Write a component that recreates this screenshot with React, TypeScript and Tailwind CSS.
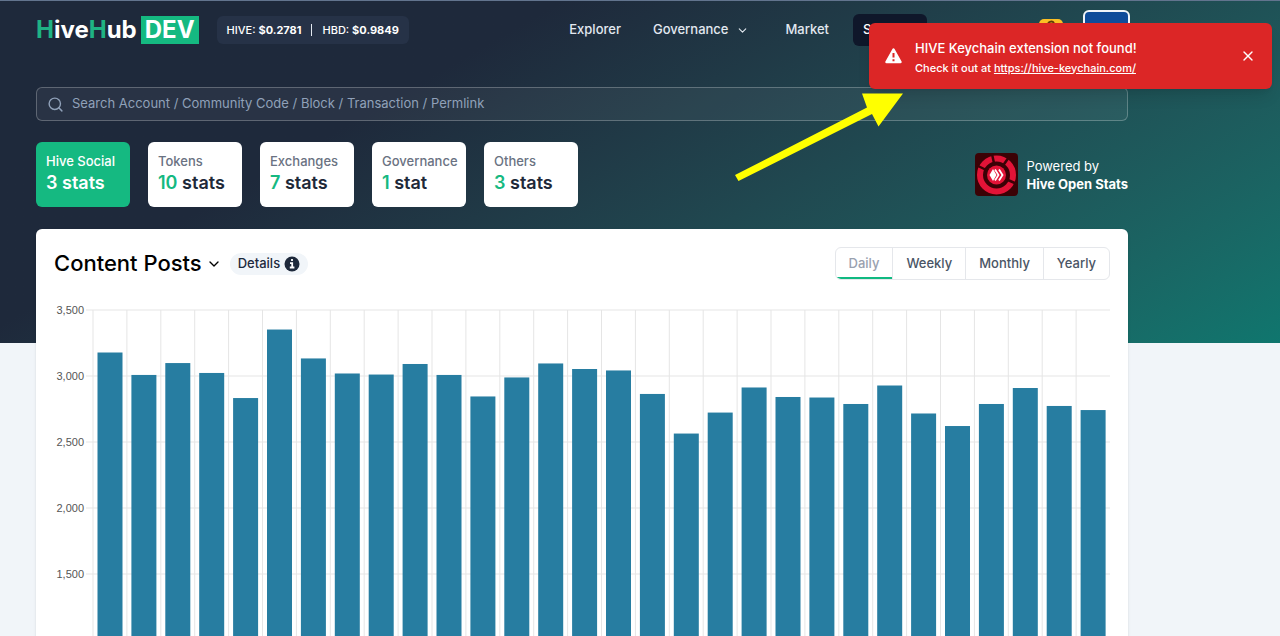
import { useState } from "react";
import clsx from "clsx";
import { ChevronDown, Search, X } from "lucide-react";

const categories = [
  { name: "Hive Social", count: 3 },
  { name: "Tokens", count: 10 },
  { name: "Exchanges", count: 7 },
  { name: "Governance", count: 1 },
  { name: "Others", count: 3 },
];

const periods = ["Daily", "Weekly", "Monthly", "Yearly"];

const posts = [
  3178, 3008, 3098, 3023, 2833, 3352, 3133, 3019, 3011, 3091, 3008, 2845, 2989,
  3095, 3053, 3042, 2864, 2564, 2723, 2913, 2841, 2837, 2788, 2928, 2716, 2621,
  2788, 2909, 2773, 2742,
];

const Logo = () => (
  <a href="#" className="flex items-center gap-1 text-2xl leading-7 font-bold">
    <span className="text-white">
      <span className="text-[#1fb384]">H</span>ive
      <span className="text-[#1fb384]">H</span>ub
    </span>
    <span className="bg-[#15b981] px-1 text-white">DEV</span>
  </a>
);

const Prices = () => (
  <div className="ml-[18px] flex h-7 items-center rounded-md bg-[#263247] px-[10px] text-[11px] font-medium text-white">
    <span>
      HIVE: <b className="font-bold">$0.2781</b>
    </span>
    <span className="mx-[10px] h-3 w-px bg-slate-200" />
    <span>
      HBD: <b className="font-bold">$0.9849</b>
    </span>
  </div>
);

const Nav = () => (
  <nav className="flex items-center text-[13px] font-medium text-slate-200">
    <a href="#" className="px-4">
      Explorer
    </a>
    <button className="flex items-center gap-2 px-4">
      Governance <ChevronDown size={13} />
    </button>
    <a href="#" className="ml-1 px-4">
      Market
    </a>
    <a
      href="#"
      className="ml-2 flex h-8 w-[74px] items-center rounded-md bg-[#0f172a] px-[10px] text-white"
    >
      Stats
    </a>
  </nav>
);

const Coin = () => (
  <svg width="24" height="24" viewBox="0 0 24 24">
    <rect y="1" width="24" height="16" rx="5" fill="#fbbf24" />
    <path d="M9 5 Q13 2 15 5" fill="none" stroke="#5c3a08" strokeWidth="2" />
  </svg>
);

const StatsLogo = () => (
  <svg width="43" height="43" viewBox="0 0 43 43">
    <rect width="43" height="43" rx="4" fill="#3b0206" />
    <circle
      cx="21.5"
      cy="22"
      r="16.5"
      fill="none"
      stroke="#e31337"
      strokeWidth="6"
    />
    <path
      d="M21.5 22 L17 1 M21.5 22 L34 4 M21.5 22 L42 31 M21.5 22 L1 12"
      stroke="#3b0206"
      strokeWidth="2.5"
    />
    <circle cx="21.5" cy="22" r="12" fill="#3b0206" />
    <circle cx="21.5" cy="22" r="9.5" fill="#e31337" />
    <path d="M14.5 22 L18 16 L21.5 22 L18 28 Z" fill="white" />
    <path
      d="M20 16.5 L23.5 22 L20 27.5 M24 16.5 L27.5 22 L24 27.5"
      fill="none"
      stroke="white"
      strokeWidth="1.8"
    />
  </svg>
);

const Toast = ({ onClose }: { onClose: () => void }) => (
  <div
    role="alert"
    className="absolute top-[23px] right-2 flex h-[66px] w-[403px] items-center rounded-md bg-[#dc2626] pr-4 pl-4 font-medium text-white shadow-lg"
  >
    <svg width="17" height="16" viewBox="0 0 17 16" className="shrink-0">
      <path
        d="M8.5 1.5 L15.5 14 H1.5 Z"
        fill="white"
        stroke="white"
        strokeWidth="2.5"
        strokeLinejoin="round"
      />
      <path d="M8.5 5 V9.5 M8.5 11.2 V13.2" stroke="#dc2626" strokeWidth="2" />
    </svg>
    <div className="ml-[13px] flex-1 pt-[3px]">
      <p className="text-[13px] leading-5">HIVE Keychain extension not found!</p>
      <p className="text-[11px] leading-5">
        Check it out at{" "}
        <a href="https://hive-keychain.com/" className="underline">
          https://hive-keychain.com/
        </a>
      </p>
    </div>
    <button aria-label="Close" onClick={onClose}>
      <X size={16} strokeWidth={2} />
    </button>
  </div>
);

const Arrow = () => (
  <svg
    width="170"
    height="90"
    viewBox="0 0 170 90"
    className="absolute top-[92px] left-[734px]"
  >
    <path
      d="M1 83 L133 15.5 L128 1.5 L169 1.5 L144.500 34.500 L138 22 L4.500 89 Z"
      fill="#ffff00"
    />
  </svg>
);

const PostsChart = () => {
  const top = 10;
  const left = 39;
  const step = 33.9;
  const toY = (value: number) => top + ((3500 - value) * 66) / 500;

  return (
    <svg viewBox="0 0 1056 500" className="mt-5 block w-full">
      {[3500, 3000, 2500, 2000, 1500, 1000, 500, 0].map((tick) => (
        <g key={tick}>
          <path d={`M32 ${toY(tick)} H1056`} stroke="#e5e5e5" />
          <text
            x="30"
            y={toY(tick) + 4}
            textAnchor="end"
            fontSize="11"
            fill="#555"
            className="font-['Liberation_Sans',sans-serif]"
          >
            {tick.toLocaleString("en-US")}
          </text>
        </g>
      ))}
      {posts.map((value, i) => (
        <g key={i}>
          <path d={`M${left + i * step} ${top} V${toY(0)}`} stroke="#e5e5e5" />
          <rect
            x={left + 4.5 + i * step}
            y={toY(value)}
            width="25"
            height={toY(0) - toY(value)}
            fill="#277da1"
          />
        </g>
      ))}
    </svg>
  );
};

const App = () => {
  const [category, setCategory] = useState("Hive Social");
  const [period, setPeriod] = useState("Daily");
  const [toastOpen, setToastOpen] = useState(true);

  return (
    <div className="relative h-screen overflow-y-auto bg-slate-100 font-['Inter',sans-serif] [scrollbar-width:none]">
      <div className="border-t border-slate-500 bg-linear-150 from-[#1e293b] from-30% to-[#0f766e] pr-[152px] pb-[136px] pl-9">
        <header className="flex h-[58px] items-center">
          <Logo />
          <Prices />
          <div className="-mr-[2px] ml-auto flex items-center">
            <Nav />
            <div className="ml-28">
              <Coin />
            </div>
            <button
              aria-label="Account"
              className="ml-5 h-10 w-[47px] rounded-md border-2 border-slate-100 bg-[#0f4c9a]"
            />
          </div>
        </header>

        <label className="mt-7 flex h-[34px] items-center gap-2 rounded-md border border-white/25 bg-white/5 px-[10px]">
          <Search size={17} strokeWidth={2} className="text-slate-400" />
          <input
            type="text"
            aria-label="Search"
            placeholder="Search Account / Community Code / Block / Transaction / Permlink"
            className="flex-1 bg-transparent text-[13px] text-white outline-none placeholder:text-slate-400"
          />
        </label>

        <div className="mt-[21px] flex items-center justify-between">
          <div className="flex gap-[18px]">
            {categories.map(({ name, count }) => (
              <button
                key={name}
                onClick={() => setCategory(name)}
                className={clsx(
                  "h-[65px] w-[94px] rounded-md px-[10px] pb-[3px] text-left whitespace-nowrap",
                  name === category
                    ? "bg-[#15b981] text-white"
                    : "bg-white text-gray-500",
                )}
              >
                <span className="block text-[13px] leading-5 font-medium">
                  {name}
                </span>
                <span
                  className={clsx(
                    "block text-lg leading-6 font-semibold",
                    name !== category && "text-gray-800",
                  )}
                >
                  <span className={clsx(name !== category && "text-[#15b981]")}>
                    {count}
                  </span>{" "}
                  {count === 1 ? "stat" : "stats"}
                </span>
              </button>
            ))}
          </div>
          <a
            href="#"
            className="flex items-center gap-2 text-[13px] leading-[18px] text-white"
          >
            <StatsLogo />
            <span>
              Powered by
              <b className="block font-bold">Hive Open Stats</b>
            </span>
          </a>
        </div>
      </div>

      <main className="relative -mt-[114px] mr-[152px] ml-9">
        <section className="rounded-md bg-white px-[18px] pt-[18px] pb-6 shadow-sm">
          <div className="flex items-center">
            <button className="flex items-center gap-1 text-[22px] font-medium text-black">
              Content Posts <ChevronDown size={16} strokeWidth={2} />
            </button>
            <button className="ml-2 flex h-[22px] items-center gap-1 rounded-full bg-slate-100 px-2 text-[13px] font-medium text-slate-800">
              Details
              <svg width="16" height="16" viewBox="0 0 16 16">
                <circle cx="8" cy="8" r="7.5" fill="#1e293b" />
                <path
                  d="M8 3 V5 M6 7.2 H8.200 V11.500 M5.800 11.500 H10.400"
                  fill="none"
                  stroke="white"
                  strokeWidth="1.8"
                />
              </svg>
            </button>
            <div className="ml-auto flex h-[33px] overflow-hidden rounded-md border border-gray-200 text-[13px] font-medium">
              {periods.map((name) => (
                <button
                  key={name}
                  onClick={() => setPeriod(name)}
                  className={clsx(
                    "border-r border-gray-200 px-[13px] last:border-r-0",
                    name === period
                      ? "text-gray-400 shadow-[inset_0_-2px_0_#10b981]"
                      : "text-gray-600",
                  )}
                >
                  {name}
                </button>
              ))}
            </div>
          </div>
          <PostsChart />
        </section>
      </main>

      {toastOpen && <Toast onClose={() => setToastOpen(false)} />}
      <Arrow />
    </div>
  );
};

export default App;
